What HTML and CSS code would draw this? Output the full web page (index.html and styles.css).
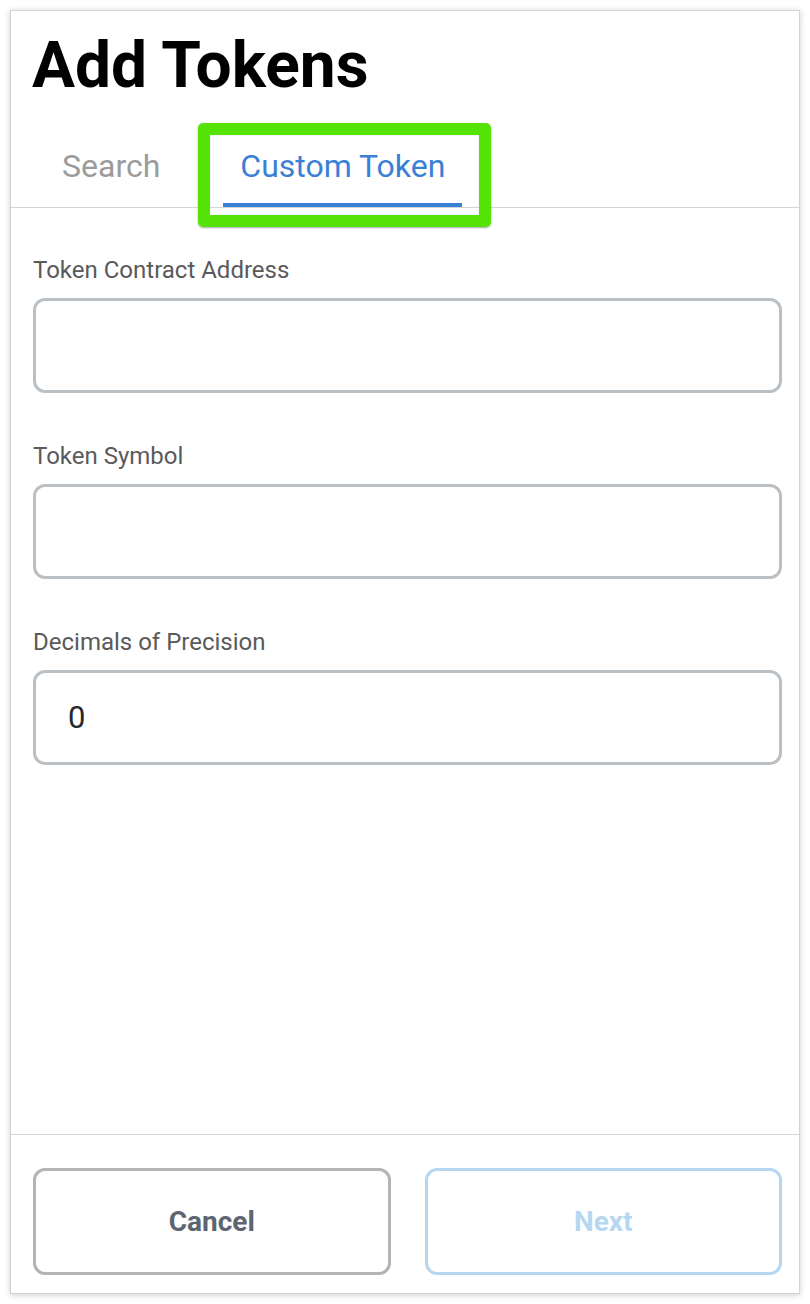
FILE: index.html
```html
<!DOCTYPE html>
<html>
<head>
<meta charset="utf-8">
<link rel="stylesheet" href="styles.css">
</head>
<body>
<div class="card">
  <h1 class="title">Add Tokens</h1>
  <div class="tabs">
    <div class="tab">Search</div>
    <div class="tab tab-active">Custom Token<span class="highlight"></span></div>
  </div>
  <div class="form">
    <div class="field">
      <div class="label">Token Contract Address</div>
      <div class="input"></div>
    </div>
    <div class="field">
      <div class="label">Token Symbol</div>
      <div class="input"></div>
    </div>
    <div class="field">
      <div class="label">Decimals of Precision</div>
      <div class="input">0</div>
    </div>
  </div>
  <div class="footer">
    <div class="btn btn-cancel">Cancel</div>
    <div class="btn btn-next">Next</div>
  </div>
</div>
</body>
</html>
```
FILE: styles.css
```css
html, body {
  margin: 0;
  padding: 0;
  background: #ffffff;
  font-family: Roboto, "Liberation Sans", sans-serif;
}
.card {
  margin: 10px;
  width: 790px;
  height: 1284px;
  box-sizing: border-box;
  border: 1px solid #d3d3d3;
  box-shadow: 0 1px 6px rgba(0,0,0,0.2);
  display: flex;
  flex-direction: column;
  background: #fff;
}
.title {
  margin: 22px 0 0 21px;
  font-size: 64px;
  line-height: 66px;
  font-weight: 700;
  color: #000;
}
.tabs {
  display: flex;
  gap: 46px;
  margin-top: 45px;
  padding-left: 34px;
  border-bottom: 1px solid #d2d6da;
}
.tab {
  position: relative;
  font-size: 32px;
  line-height: 44px;
  padding: 0 17px 15px;
  border-bottom: 4px solid transparent;
  color: #9b9b9b;
}
.tab-active {
  color: #3a80d5;
  border-bottom-color: #3a80d5;
}
.highlight {
  position: absolute;
  left: -25px;
  right: -29px;
  top: -21px;
  bottom: -24px;
  border: 12px solid #55e307;
  border-radius: 5px;
  box-shadow: 0 1px 2px rgba(0,0,0,0.35), inset 0 0 1px rgba(0,0,0,0.4);
}
.form {
  flex: 1;
  padding: 49px 17px 0 22px;
  display: flex;
  flex-direction: column;
  gap: 50px;
}
.field {
  display: flex;
  flex-direction: column;
  gap: 15px;
}
.label {
  font-size: 24px;
  line-height: 26px;
  color: #5a5a5a;
}
.input {
  height: 95px;
  box-sizing: border-box;
  border: 3px solid #bbc0c5;
  border-radius: 12px;
  padding-left: 32px;
  font-size: 31px;
  line-height: 89px;
  color: #24292e;
}
.footer {
  border-top: 1px solid #d2d6da;
  padding: 33px 17px 18px 22px;
  display: flex;
  gap: 34px;
}
.btn {
  flex: 1;
  height: 107px;
  box-sizing: border-box;
  border-radius: 12px;
  display: flex;
  align-items: center;
  justify-content: center;
  font-size: 28px;
  font-weight: 700;
}
.btn-cancel {
  border: 3px solid #b4b4b4;
  color: #5d6570;
}
.btn-next {
  border: 3px solid #b7d7f1;
  color: #b7d7f1;
}
```
